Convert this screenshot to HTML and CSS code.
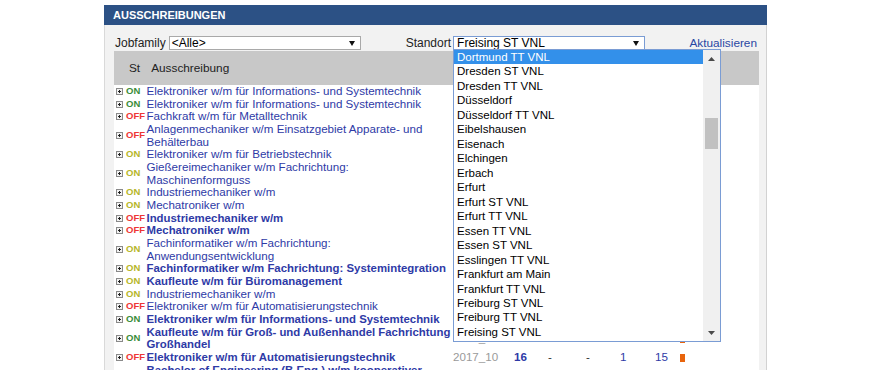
FILE: index.html
```html
<!DOCTYPE html>
<html lang="de">
<head>
<meta charset="utf-8">
<title>Ausschreibungen</title>
<link rel="stylesheet" href="styles.css">
</head>
<body>
<div class="panel">
  <div class="panel-title">AUSSCHREIBUNGEN</div>
  <div class="panel-body">
    <div class="filters">
      <span class="lbl">Jobfamily</span>
      <div class="select sel-job"><span>&lt;Alle&gt;</span><svg class="arrow" width="6" height="5" viewBox="0 0 6 5"><polygon points="0,0 6,0 3,5" fill="#111"/></svg></div>
      <span class="lbl lbl-standort">Standort</span>
      <div class="select-wrap">
        <div class="select sel-standort"><span>Freising ST VNL</span><svg class="arrow" width="6" height="5" viewBox="0 0 6 5"><polygon points="0,0 6,0 3,5" fill="#111"/></svg></div>
        <div class="dropdown">
          <ul class="options">
            <li class="sel">Dortmund TT VNL</li>
            <li>Dresden ST VNL</li>
            <li>Dresden TT VNL</li>
            <li>Düsseldorf</li>
            <li>Düsseldorf TT VNL</li>
            <li>Eibelshausen</li>
            <li>Eisenach</li>
            <li>Elchingen</li>
            <li>Erbach</li>
            <li>Erfurt</li>
            <li>Erfurt ST VNL</li>
            <li>Erfurt TT VNL</li>
            <li>Essen TT VNL</li>
            <li>Essen ST VNL</li>
            <li>Esslingen TT VNL</li>
            <li>Frankfurt am Main</li>
            <li>Frankfurt TT VNL</li>
            <li>Freiburg ST VNL</li>
            <li>Freiburg TT VNL</li>
            <li>Freising ST VNL</li>
          </ul>
          <div class="scrollbar">
            <div class="sb-btn"><svg width="7" height="4" viewBox="0 0 7 4"><polygon points="0,4 7,4 3.5,0" fill="#4a4a4a"/></svg></div>
            <div class="sb-track"><div class="sb-thumb"></div></div>
            <div class="sb-btn"><svg width="7" height="4" viewBox="0 0 7 4"><polygon points="0,0 7,0 3.5,4" fill="#4a4a4a"/></svg></div>
          </div>
        </div>
      </div>
      <a class="refresh" href="#">Aktualisieren</a>
    </div>

    <div class="table">
      <div class="thead"><span class="th-st">St</span><span class="th-title">Ausschreibung</span></div>
      <div class="tbody">
        <div class="row"><div class="st"><svg class="ico" width="7" height="7" viewBox="0 0 7 7"><rect x="0.5" y="0.5" width="6" height="6" fill="#f2f2f2" stroke="#8a8a8a"/><path d="M2 3.5h3M3.5 2v3" stroke="#222"/></svg><span class="on-g">ON</span></div><div class="title">Elektroniker w/m für Informations- und Systemtechnik</div></div>
        <div class="row"><div class="st"><svg class="ico" width="7" height="7" viewBox="0 0 7 7"><rect x="0.5" y="0.5" width="6" height="6" fill="#f2f2f2" stroke="#8a8a8a"/><path d="M2 3.5h3M3.5 2v3" stroke="#222"/></svg><span class="on-g">ON</span></div><div class="title">Elektroniker w/m für Informations- und Systemtechnik</div></div>
        <div class="row"><div class="st"><svg class="ico" width="7" height="7" viewBox="0 0 7 7"><rect x="0.5" y="0.5" width="6" height="6" fill="#f2f2f2" stroke="#8a8a8a"/><path d="M2 3.5h3M3.5 2v3" stroke="#222"/></svg><span class="off">OFF</span></div><div class="title">Fachkraft w/m für Metalltechnik</div></div>
        <div class="row"><div class="st"><svg class="ico" width="7" height="7" viewBox="0 0 7 7"><rect x="0.5" y="0.5" width="6" height="6" fill="#f2f2f2" stroke="#8a8a8a"/><path d="M2 3.5h3M3.5 2v3" stroke="#222"/></svg><span class="off">OFF</span></div><div class="title">Anlagenmechaniker w/m Einsatzgebiet Apparate- und Behälterbau</div></div>
        <div class="row"><div class="st"><svg class="ico" width="7" height="7" viewBox="0 0 7 7"><rect x="0.5" y="0.5" width="6" height="6" fill="#f2f2f2" stroke="#8a8a8a"/><path d="M2 3.5h3M3.5 2v3" stroke="#222"/></svg><span class="on-y">ON</span></div><div class="title">Elektroniker w/m für Betriebstechnik</div></div>
        <div class="row"><div class="st"><svg class="ico" width="7" height="7" viewBox="0 0 7 7"><rect x="0.5" y="0.5" width="6" height="6" fill="#f2f2f2" stroke="#8a8a8a"/><path d="M2 3.5h3M3.5 2v3" stroke="#222"/></svg><span class="on-y">ON</span></div><div class="title">Gießereimechaniker w/m Fachrichtung: Maschinenformguss</div></div>
        <div class="row"><div class="st"><svg class="ico" width="7" height="7" viewBox="0 0 7 7"><rect x="0.5" y="0.5" width="6" height="6" fill="#f2f2f2" stroke="#8a8a8a"/><path d="M2 3.5h3M3.5 2v3" stroke="#222"/></svg><span class="on-y">ON</span></div><div class="title">Industriemechaniker w/m</div></div>
        <div class="row"><div class="st"><svg class="ico" width="7" height="7" viewBox="0 0 7 7"><rect x="0.5" y="0.5" width="6" height="6" fill="#f2f2f2" stroke="#8a8a8a"/><path d="M2 3.5h3M3.5 2v3" stroke="#222"/></svg><span class="on-y">ON</span></div><div class="title">Mechatroniker w/m</div></div>
        <div class="row"><div class="st"><svg class="ico" width="7" height="7" viewBox="0 0 7 7"><rect x="0.5" y="0.5" width="6" height="6" fill="#f2f2f2" stroke="#8a8a8a"/><path d="M2 3.5h3M3.5 2v3" stroke="#222"/></svg><span class="off">OFF</span></div><div class="title b">Industriemechaniker w/m</div></div>
        <div class="row"><div class="st"><svg class="ico" width="7" height="7" viewBox="0 0 7 7"><rect x="0.5" y="0.5" width="6" height="6" fill="#f2f2f2" stroke="#8a8a8a"/><path d="M2 3.5h3M3.5 2v3" stroke="#222"/></svg><span class="off">OFF</span></div><div class="title b">Mechatroniker w/m</div></div>
        <div class="row"><div class="st"><svg class="ico" width="7" height="7" viewBox="0 0 7 7"><rect x="0.5" y="0.5" width="6" height="6" fill="#f2f2f2" stroke="#8a8a8a"/><path d="M2 3.5h3M3.5 2v3" stroke="#222"/></svg><span class="on-y">ON</span></div><div class="title">Fachinformatiker w/m Fachrichtung: Anwendungsentwicklung</div></div>
        <div class="row"><div class="st"><svg class="ico" width="7" height="7" viewBox="0 0 7 7"><rect x="0.5" y="0.5" width="6" height="6" fill="#f2f2f2" stroke="#8a8a8a"/><path d="M2 3.5h3M3.5 2v3" stroke="#222"/></svg><span class="on-y">ON</span></div><div class="title b">Fachinformatiker w/m Fachrichtung: Systemintegration</div></div>
        <div class="row"><div class="st"><svg class="ico" width="7" height="7" viewBox="0 0 7 7"><rect x="0.5" y="0.5" width="6" height="6" fill="#f2f2f2" stroke="#8a8a8a"/><path d="M2 3.5h3M3.5 2v3" stroke="#222"/></svg><span class="on-y">ON</span></div><div class="title b">Kaufleute w/m für Büromanagement</div></div>
        <div class="row"><div class="st"><svg class="ico" width="7" height="7" viewBox="0 0 7 7"><rect x="0.5" y="0.5" width="6" height="6" fill="#f2f2f2" stroke="#8a8a8a"/><path d="M2 3.5h3M3.5 2v3" stroke="#222"/></svg><span class="on-y">ON</span></div><div class="title">Industriemechaniker w/m</div></div>
        <div class="row"><div class="st"><svg class="ico" width="7" height="7" viewBox="0 0 7 7"><rect x="0.5" y="0.5" width="6" height="6" fill="#f2f2f2" stroke="#8a8a8a"/><path d="M2 3.5h3M3.5 2v3" stroke="#222"/></svg><span class="off">OFF</span></div><div class="title">Elektroniker w/m für Automatisierungstechnik</div></div>
        <div class="row"><div class="st"><svg class="ico" width="7" height="7" viewBox="0 0 7 7"><rect x="0.5" y="0.5" width="6" height="6" fill="#f2f2f2" stroke="#8a8a8a"/><path d="M2 3.5h3M3.5 2v3" stroke="#222"/></svg><span class="on-g">ON</span></div><div class="title b">Elektroniker w/m für Informations- und Systemtechnik</div></div>
        <div class="row"><div class="st"><svg class="ico" width="7" height="7" viewBox="0 0 7 7"><rect x="0.5" y="0.5" width="6" height="6" fill="#f2f2f2" stroke="#8a8a8a"/><path d="M2 3.5h3M3.5 2v3" stroke="#222"/></svg><span class="on-g">ON</span></div><div class="title b">Kaufleute w/m für Groß- und Außenhandel Fachrichtung Großhandel</div><div class="yr">2017_10</div><div class="n b">13</div><div class="d">-</div><div class="d">-</div><div class="n">1</div><div class="n">12</div><div><span class="bar"></span></div></div>
        <div class="row"><div class="st"><svg class="ico" width="7" height="7" viewBox="0 0 7 7"><rect x="0.5" y="0.5" width="6" height="6" fill="#f2f2f2" stroke="#8a8a8a"/><path d="M2 3.5h3M3.5 2v3" stroke="#222"/></svg><span class="off">OFF</span></div><div class="title b">Elektroniker w/m für Automatisierungstechnik</div><div class="yr">2017_10</div><div class="n b">16</div><div class="d">-</div><div class="d">-</div><div class="n">1</div><div class="n">15</div><div><span class="bar"></span></div></div>
        <div class="row"><div class="st"><svg class="ico" width="7" height="7" viewBox="0 0 7 7"><rect x="0.5" y="0.5" width="6" height="6" fill="#f2f2f2" stroke="#8a8a8a"/><path d="M2 3.5h3M3.5 2v3" stroke="#222"/></svg><span class="off">OFF</span></div><div class="title b">Bachelor of Engineering (B.Eng.) w/m kooperativer Studiengang</div></div>
      </div>
    </div>
  </div>
</div>
</body>
</html>
```

FILE: styles.css
```css
html, body {
  margin: 0;
  height: 100%;
  overflow: hidden;
  background: #fff;
}
body {
  font-family: "Liberation Sans", Arial, sans-serif;
  font-size: 11.7px;
  color: #222;
}

.panel {
  margin: 5px 0 0 104px;
  width: 663px;
}
.panel-title {
  height: 20px;
  line-height: 20px;
  background: #2c5185;
  color: #fff;
  font-weight: bold;
  font-size: 11px;
  padding-left: 9px;
}
.panel-body {
  position: relative;
  background: #f2f2f2;
  border-left: 1px solid #d9d9d9;
  border-right: 1px solid #d2d2d2;
  padding: 0 7px 0 9px;
  height: 345px;
}

/* filter row */
.filters {
  display: flex;
  align-items: center;
  height: 14px;
  padding: 11px 0 1px 1px;
}
.lbl {
  font-size: 12px;
  line-height: 14px;
  color: #222;
}
.lbl-standort {
  margin-left: 45px;
}
.select {
  box-sizing: border-box;
  height: 14px;
  width: 192px;
  background: #fff;
  border: 1px solid #a9a9a9;
  display: flex;
  align-items: center;
  justify-content: space-between;
  padding: 0 5px 0 2px;
  font-size: 12px;
  line-height: 12px;
  color: #000;
}
.sel-job {
  margin-left: 3px;
}
.select-wrap {
  position: relative;
  margin-left: 2px;
}
.sel-standort {
  border-color: #7a9cd4;
  padding-left: 3px;
}
.arrow {
  display: block;
}
.refresh {
  margin-left: auto;
  margin-right: 2px;
  font-size: 11.8px;
  line-height: 14px;
  color: #2a47a3;
  text-decoration: none;
}

/* dropdown list */
.dropdown {
  position: absolute;
  top: 13px;
  left: 0;
  z-index: 5;
  box-sizing: border-box;
  width: 268px;
  height: 293px;
  border: 1px solid #7a9cd4;
  background: #fff;
  display: flex;
}
.options {
  flex: 1;
  list-style: none;
  margin: 0;
  padding: 0;
}
.options li {
  height: 14.47px;
  line-height: 14.47px;
  padding-left: 3px;
  font-size: 11.5px;
  color: #000;
  white-space: nowrap;
}
.options li.sel {
  background: #3390ea;
  color: #fff;
}
.scrollbar {
  width: 17px;
  background: #f0f0f0;
  display: flex;
  flex-direction: column;
}
.sb-btn {
  height: 17px;
  display: flex;
  align-items: center;
  justify-content: center;
}
.sb-track {
  flex: 1;
  padding: 51px 2px 0 2px;
}
.sb-thumb {
  height: 31px;
  background: #c1c1c1;
}

/* table */
.thead {
  height: 34px;
  background: #c8c8c8;
  display: flex;
  align-items: center;
  font-size: 11.8px;
  color: #222;
}
.th-st {
  margin-left: 15px;
}
.th-title {
  margin-left: 11px;
}
.tbody {
  background: #fff;
}
.row {
  display: grid;
  grid-template-columns: 32.5px 306.5px 61px 34px 38px 34px 35px 25px 1fr;
  align-items: center;
  line-height: 12.67px;
  font-size: 11.6px;
}
.st {
  display: flex;
  align-items: center;
  padding-left: 2px;
}
.ico {
  display: block;
  margin-right: 3px;
}
.st span {
  font-size: 9.5px;
  font-weight: bold;
}
.on-g { color: #3a8c3a; }
.on-y { color: #b6b62a; }
.off { color: #ee3535; }
.title {
  color: #2e3aa6;
}
.title.b {
  font-size: 11.4px;
}
.b {
  font-weight: bold;
}
.yr {
  color: #9a9a9a;
}
.n {
  color: #2e3aa6;
}
.d {
  color: #333;
}
.bar {
  display: inline-block;
  vertical-align: middle;
  width: 5px;
  height: 8px;
  background: #e8640c;
}
```
